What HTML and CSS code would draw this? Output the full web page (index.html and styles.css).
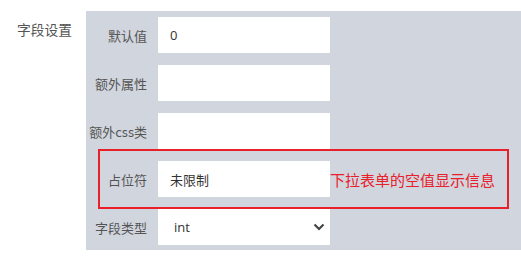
FILE: index.html
```html
<!DOCTYPE html>
<html lang="zh-CN">
<head>
    <meta charset="UTF-8">
    <title>字段设置</title>
    <link rel="stylesheet" href="styles.css">
</head>
<body>

<div class="campo">
    <div class="campo-titulo">字段设置</div>
    <div class="painel">
        <div class="linha">
            <label>默认值</label>
            <input type="text" value="0">
        </div>
        <div class="linha">
            <label>额外属性</label>
            <input type="text">
        </div>
        <div class="linha">
            <label>额外css类</label>
            <input type="text">
        </div>
        <div class="linha">
            <label>占位符</label>
            <input type="text" value="未限制">
            <span class="nota">下拉表单的空值显示信息</span>
        </div>
        <div class="linha">
            <label>字段类型</label>
            <div class="select-box">
                <select>
                    <option>int</option>
                </select>
                <svg class="seta" width="12" height="8" viewBox="0 0 12 8"><path d="M1.5 1.5 L6 6 L10.5 1.5" fill="none" stroke="#444" stroke-width="2.2"/></svg>
            </div>
        </div>
        <!-- marcação vermelha -->
        <div class="destaque"></div>
    </div>
</div>

</body>
</html>
```

FILE: styles.css
```css
body { margin: 0; font-family: "Noto Sans CJK SC", "Open Sans", sans-serif; background: #fff; color: #555; }
.campo { display: flex; align-items: flex-start; padding-top: 11px; }
.campo-titulo { width: 86px; box-sizing: border-box; padding-left: 17px; font-size: 13.75px; line-height: 36px; color: #555; }
.painel { position: relative; flex: 1; background: #d1d5de; padding: 6px 0 5px; display: flex; flex-direction: column; gap: 12px; }
.linha { display: flex; align-items: center; height: 36px; }
.linha label { width: 72px; box-sizing: border-box; padding-right: 11px; text-align: right; font-size: 13px; color: #555; }
.linha input, .linha select { width: 172px; height: 36px; box-sizing: border-box; border: none; background: #fff; padding: 0 12px; font-family: "Open Sans", "Noto Sans CJK SC", sans-serif; font-size: 13px; color: #333; outline: none; margin: 0; }
.select-box { position: relative; }
.select-box select { appearance: none; -webkit-appearance: none; padding-left: 16px; border-radius: 0; }
.seta { position: absolute; right: 5px; top: 14px; }
.nota { color: #e8202a; font-size: 15px; white-space: nowrap; }
.destaque { position: absolute; left: 12px; top: 138px; width: 407px; height: 56px; border: 2px solid #e8202a; pointer-events: none; }
```
